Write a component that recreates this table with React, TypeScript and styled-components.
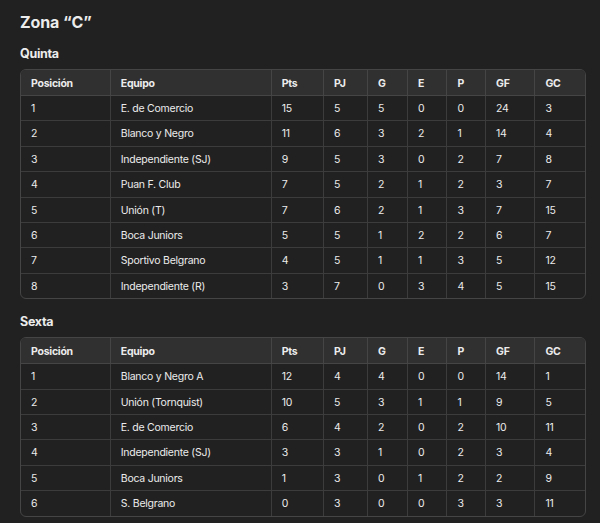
import React from "react";
import styled, { createGlobalStyle } from "styled-components";

const Global = createGlobalStyle`
  html, body { margin: 0; padding: 0; background: #212121; }
  body { font-family: Inter, "Noto Sans", sans-serif; color: #ececec; }
`;

const Page = styled.div`
  width: 566px;
  padding: 12px 14px 8px 20px;
`;

const Title = styled.h2`
  margin: 0;
  font-size: 16px;
  line-height: 20px;
  font-weight: 700;
  letter-spacing: -0.1px;
`;

const Subtitle = styled.h3<{ $top: number }>`
  margin: ${(p) => p.$top}px 0 7px;
  font-size: 12.5px;
  line-height: 16px;
  font-weight: 700;
  letter-spacing: -0.3px;
`;

const TableWrap = styled.div`
  border: 1px solid #454545;
  border-radius: 6px;
  overflow: hidden;
`;

const Table = styled.table`
  width: 100%;
  border-collapse: collapse;
  table-layout: fixed;
  font-size: 10.5px;
  letter-spacing: -0.25px;
`;

const Th = styled.th`
  background: #303030;
  text-align: left;
  font-weight: 700;
  padding: 5.5px 10px 4.5px;
  line-height: 15px;
  border-left: 1px solid #454545;
  border-bottom: 1px solid #454545;
  &:first-child { border-left: none; }
`;

const Td = styled.td`
  padding: 6px 10px 4px;
  line-height: 14.4px;
  border-left: 1px solid #3c3c3c;
  border-top: 1px solid #3c3c3c;
  &:first-child { border-left: none; }
`;

const Row = styled.tr`
  &:first-child td { border-top: none; }
`;

const widths = [89.3, 161, 52.3, 44, 40, 39.4, 38.6, 49.4, 50.6];
const heads = ["Posición", "Equipo", "Pts", "PJ", "G", "E", "P", "GF", "GC"];

type R = (string | number)[];

const quinta: R[] = [
  [1, "E. de Comercio", 15, 5, 5, 0, 0, 24, 3],
  [2, "Blanco y Negro", 11, 6, 3, 2, 1, 14, 4],
  [3, "Independiente (SJ)", 9, 5, 3, 0, 2, 7, 8],
  [4, "Puan F. Club", 7, 5, 2, 1, 2, 3, 7],
  [5, "Unión (T)", 7, 6, 2, 1, 3, 7, 15],
  [6, "Boca Juniors", 5, 5, 1, 2, 2, 6, 7],
  [7, "Sportivo Belgrano", 4, 5, 1, 1, 3, 5, 12],
  [8, "Independiente (R)", 3, 7, 0, 3, 4, 5, 15],
];

const sexta: R[] = [
  [1, "Blanco y Negro A", 12, 4, 4, 0, 0, 14, 1],
  [2, "Unión (Tornquist)", 10, 5, 3, 1, 1, 9, 5],
  [3, "E. de Comercio", 6, 4, 2, 0, 2, 10, 11],
  [4, "Independiente (SJ)", 3, 3, 1, 0, 2, 3, 4],
  [5, "Boca Juniors", 1, 3, 0, 1, 2, 2, 9],
  [6, "S. Belgrano", 0, 3, 0, 0, 3, 3, 11],
];

function Standings({ rows }: { rows: R[] }) {
  return (
    <TableWrap>
      <Table>
        <colgroup>
          {widths.map((w, i) => (
            <col key={i} style={{ width: w }} />
          ))}
        </colgroup>
        <thead>
          <tr>
            {heads.map((h) => (
              <Th key={h}>{h}</Th>
            ))}
          </tr>
        </thead>
        <tbody>
          {rows.map((r, i) => (
            <Row key={i}>
              {r.map((c, j) => (
                <Td key={j}>{c}</Td>
              ))}
            </Row>
          ))}
        </tbody>
      </Table>
    </TableWrap>
  );
}

export default function App() {
  return (
    <>
      <Global />
      <Page>
        <Title>Zona “C”</Title>
        <Subtitle $top={14}>Quinta</Subtitle>
        <Standings rows={quinta} />
        <Subtitle $top={15}>Sexta</Subtitle>
        <Standings rows={sexta} />
      </Page>
    </>
  );
}
